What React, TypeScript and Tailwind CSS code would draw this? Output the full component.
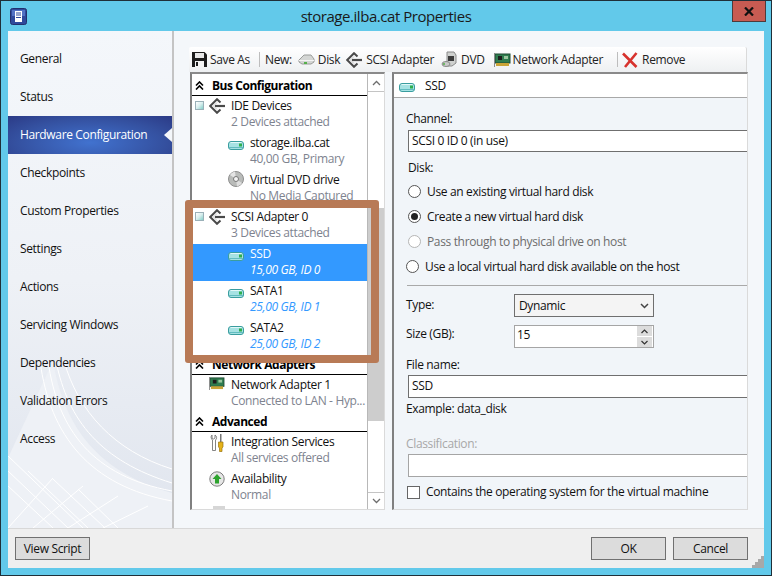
import type { ReactNode } from 'react'

const NavItems = [
  'General',
  'Status',
  'Hardware Configuration',
  'Checkpoints',
  'Custom Properties',
  'Settings',
  'Actions',
  'Servicing Windows',
  'Dependencies',
  'Validation Errors',
  'Access',
]

function AppIcon() {
  return (
    <svg width="17" height="17" viewBox="0 0 17 17">
      <rect x="0.5" y="0.5" width="16" height="16" rx="2" fill="#2f4a9c" stroke="#22306e" />
      <rect x="2" y="2" width="13" height="6" fill="#5272c4" />
      <rect x="5" y="3" width="7" height="11" fill="#fff" />
      <path d="M6 5h5M6 7h5M6 9.5h5" stroke="#2f4a9c" />
    </svg>
  )
}

function Floppy() {
  return (
    <svg width="15" height="15" viewBox="0 0 15 15">
      <path d="M0 0h12.5L15 2.5V15H0z" fill="#1c1c1c" />
      <rect x="3" y="1" width="9" height="5" fill="#e8e8e8" />
      <rect x="3" y="9" width="9" height="6" fill="#f4f4f4" />
      <rect x="4" y="10" width="2" height="4" fill="#1c1c1c" />
    </svg>
  )
}

function GrayDisk() {
  return (
    <svg width="17" height="11" viewBox="0 0 17 11">
      <path d="M1 6l5-5h7l3 4v3l-3 2H4L1 8z" fill="#d4d6d4" stroke="#9a9c9a" />
      <path d="M1 6.500h15" stroke="#f4f4f4" />
      <rect x="6" y="8" width="3" height="2" fill="#55b04a" />
    </svg>
  )
}

function Adapter() {
  return (
    <svg width="16" height="16" viewBox="0 0 16 16" fill="none">
      <path d="M11.500 4.500L8 1.200 1.200 8 8 14.800l3.500-3.300" stroke="#4a4a4a" strokeWidth="2" />
      <path d="M6 8h10" stroke="#4a4a4a" strokeWidth="2.200" />
      <path d="M8 4.500L4.500 8 8 11.500" stroke="#c8c8c8" />
    </svg>
  )
}

function DvdDevice() {
  return (
    <svg width="17" height="17" viewBox="0 0 17 17">
      <path d="M6 1h7l2 3v8l-4 3H6z" fill="#cfd1cf" stroke="#8a8a8a" />
      <rect x="7" y="5" width="6" height="5" fill="#3c3c3c" />
      <ellipse cx="5" cy="13" rx="4" ry="2.500" fill="#c8cac8" stroke="#8a8a8a" />
      <circle cx="3" cy="13" r="1" fill="#55b04a" />
    </svg>
  )
}

function Nic({ size = 17 }: { size?: number }) {
  return (
    <svg width={size} height={size - 3} viewBox="0 0 17 14">
      <rect x="1" y="1" width="15" height="9" fill="#2f7d4f" stroke="#1f4a33" />
      <rect x="4" y="3" width="4" height="4" fill="#1c1c1c" />
      <rect x="10" y="3" width="4" height="3" fill="#9bc79f" />
      <path d="M2 10h13v3H2z" fill="#c9a437" />
      <path d="M0 0h1v14H0z" fill="#8a8a8a" />
    </svg>
  )
}

function RedX() {
  return (
    <svg width="16" height="16" viewBox="0 0 16 16">
      <path d="M1 1.500L14.500 15M14.500 1L3 15" stroke="#d7322d" strokeWidth="2.600" fill="none" />
    </svg>
  )
}

function Drive({ className }: { className?: string }) {
  return (
    <svg width="16" height="9" viewBox="0 0 16 9" className={className}>
      <rect x="0.500" y="0.500" width="15" height="8" rx="2.500" fill="#a6e2e3" stroke="#3a9d9f" />
      <path d="M2.500 1.500h11" stroke="#e2f8f8" />
      <path d="M1 6.500h14" stroke="#62bcc0" />
      <rect x="11" y="2.500" width="3" height="3" fill="#2fae4e" />
    </svg>
  )
}

function Disc() {
  return (
    <svg width="16" height="16" viewBox="0 0 16 16" className="-mt-px">
      <circle cx="8" cy="8" r="7.500" fill="#b9bbb9" stroke="#8e8e8e" />
      <path d="M8 8L2 4a7 7 0 0 1 5-3.500z" fill="#e4e4e4" />
      <path d="M8 8l6 4a7 7 0 0 1-5 3.500z" fill="#dedede" />
      <circle cx="8" cy="8" r="2.500" fill="#f4f4f4" stroke="#777" />
    </svg>
  )
}

function Tools() {
  return (
    <svg width="14" height="18" viewBox="0 0 14 18">
      <path d="M2 1v3l1.500 1L5 4V1c2 1 2 4 .5 5v10.500h-3V6C1 5 .5 2 2 1z" fill="#fff" stroke="#777" strokeWidth="0.900" />
      <rect x="10" y="0" width="1.500" height="8" fill="#777" />
      <path d="M8.500 8h4.500v5l-1 1v3.500H9.500V14l-1-1z" fill="#e5b21a" stroke="#9a7410" strokeWidth="0.700" />
    </svg>
  )
}

function Availability() {
  return (
    <svg width="16" height="16" viewBox="0 0 16 16">
      <circle cx="8" cy="8" r="7.200" fill="#e6e6e6" stroke="#7d7d7d" />
      <path d="M8 3l4.500 5H10v4.500H6V8H3.500z" fill="#2ea32e" />
    </svg>
  )
}

function Expander() {
  return (
    <span className="w-[9px] h-[9px] mt-[3px] border border-[#9ab0b8] bg-linear-to-br from-[#ffffff] via-[#d8eeee] to-[#7fcfc8] shrink-0" />
  )
}

function DoubleChevron() {
  return (
    <svg width="9" height="9" viewBox="0 0 9 9" className="shrink-0">
      <path d="M1 4.500l3.500-3.500L8 4.500M1 8.500L4.500 5 8 8.500" fill="none" stroke="#000" strokeWidth="1.600" />
    </svg>
  )
}

function GroupHeader({ title }: { title: string }) {
  return (
    <div className="h-[20px] border-b border-black pl-[3px] flex items-center">
      <DoubleChevron />
      <span className="ml-[8px] font-bold text-black text-[12px] tracking-[-0.45px]">{title}</span>
    </div>
  )
}

function AdapterRow({ title, sub, icon, expander }: { title: string; sub: string; icon: ReactNode; expander?: boolean }) {
  return (
    <div className="h-[37px] flex pt-[2px] pl-[3px]">
      <span className="w-[9px] shrink-0 flex">{expander && <Expander />}</span>
      <span className="w-[16px] ml-[5px] mr-[6px] shrink-0 flex justify-center">{icon}</span>
      <div className="leading-[16px] whitespace-nowrap">
        <div className="text-[#111]">{title}</div>
        <div className="text-[#7e838f]">{sub}</div>
      </div>
    </div>
  )
}

function ChildRow({ title, sub, icon, blue, selected }: { title: string; sub: string; icon: ReactNode; blue?: boolean; selected?: boolean }) {
  return (
    <div className={`h-[37px] flex pt-[2px] pl-[36px] ${selected ? 'bg-[#3399ff]' : ''}`}>
      <span className="w-[16px] mr-[6px] shrink-0 flex justify-center items-start">{icon}</span>
      <div className="leading-[16px] whitespace-nowrap">
        <div className={selected ? 'text-white' : 'text-[#111]'}>{title}</div>
        <div className={selected ? 'text-white italic' : blue ? 'text-[#3399ff] italic' : 'text-[#7e838f]'}>{sub}</div>
      </div>
    </div>
  )
}

function HardwareList() {
  return (
    <div className="w-[195px] flex border-t-2 border-l-2 border-t-[#8a8a8a] border-l-[#808080] border-r border-b border-r-[#dadada] border-b-[#dadada] overflow-hidden">
      <div className="w-[175px] pt-[2px] bg-white overflow-hidden border-r border-[#b8b8b8] box-content">
        <GroupHeader title="Bus Configuration" />
        <AdapterRow title="IDE Devices" sub="2 Devices attached" icon={<Adapter />} expander />
        <ChildRow title="storage.ilba.cat" sub="40,00 GB, Primary" icon={<Drive className="mt-[6px]" />} />
        <ChildRow title="Virtual DVD drive" sub="No Media Captured" icon={<Disc />} />
        <AdapterRow title="SCSI Adapter 0" sub="3 Devices attached" icon={<Adapter />} expander />
        <ChildRow title="SSD" sub="15,00 GB, ID 0" icon={<Drive className="mt-[6px]" />} selected />
        <ChildRow title="SATA1" sub="25,00 GB, ID 1" icon={<Drive className="mt-[6px]" />} blue />
        <ChildRow title="SATA2" sub="25,00 GB, ID 2" icon={<Drive className="mt-[6px]" />} blue />
        <GroupHeader title="Network Adapters" />
        <AdapterRow title="Network Adapter 1" sub="Connected to LAN - Hyp..." icon={<Nic size={16} />} />
        <GroupHeader title="Advanced" />
        <AdapterRow title="Integration Services" sub="All services offered" icon={<Tools />} />
        <AdapterRow title="Availability" sub="Normal" icon={<Availability />} />
        <div className="ml-[21px] w-[12px] h-[3px] bg-[#d6d6d6]" />
      </div>
      <div className="w-[16px] flex flex-col bg-white">
        <div className="h-[17px] mt-px border-b border-[#c4c4c4] flex items-center justify-center">
          <svg width="9" height="6" viewBox="0 0 9 6">
            <path d="M1 5l3.500-3.500L8 5" fill="none" stroke="#6e6e6e" strokeWidth="1.300" />
          </svg>
        </div>
        <div className="h-[116px]" />
        <div className="h-[213px] bg-[#cdcdcd]" />
        <div className="flex-1" />
        <div className="h-[17px] border-t border-[#c4c4c4] flex items-center justify-center">
          <svg width="9" height="6" viewBox="0 0 9 6">
            <path d="M1 1l3.500 3.500L8 1" fill="none" stroke="#6e6e6e" strokeWidth="1.300" />
          </svg>
        </div>
      </div>
    </div>
  )
}

function Radio({ label, checked, disabled, flush }: { label: string; checked?: boolean; disabled?: boolean; flush?: boolean }) {
  return (
    <div className={`h-[25px] flex items-center ${flush ? 'ml-0' : 'ml-[2px]'}`}>
      <span
        className={`w-[13px] h-[13px] rounded-full border flex items-center justify-center bg-white ${disabled ? 'border-[#b5b5b5]' : 'border-[#555]'}`}
      >
        {checked && <span className="w-[7px] h-[7px] rounded-full bg-[#222]" />}
      </span>
      <span className={`ml-[6px] whitespace-nowrap ${disabled ? 'text-[#6d6d6d]' : 'text-[#111]'}`}>{label}</span>
    </div>
  )
}

function Details() {
  return (
    <div className="w-[356px] flex flex-col border-t-2 border-l-2 border-t-[#8a8a8a] border-l-[#808080] border-r border-b border-r-[#dadada] border-b-[#dadada] overflow-hidden">
      <div className="h-[22px] shrink-0 bg-white border-b border-[#a8a8a8] box-content flex items-center pl-[5px] pt-px">
        <Drive className="mt-[2px]" />
        <span className="ml-[10px] text-[#111]">SSD</span>
      </div>
      <div className="flex-1 bg-[#f1f5f9] pl-[12px] leading-[16px] text-[#111]">
        <div className="mt-[13px]">Channel:</div>
        <div className="mt-[3px] ml-[2px] h-[22px] pl-[3px] flex items-center bg-white border border-r-0 border-[#6f6f6f]">SCSI 0 ID 0 (in use)</div>
        <div className="mt-[8px] ml-[2px]">Disk:</div>
        <div className="mt-[3px]">
          <Radio label="Use an existing virtual hard disk" />
          <Radio label="Create a new virtual hard disk" checked />
          <Radio label="Pass through to physical drive on host" disabled />
          <Radio label="Use a local virtual hard disk available on the host" flush />
        </div>
        <div className="mt-[6px] ml-px h-px bg-[#a9a9a9]" />
        <div className="mt-[8px] flex items-center">
          <span className="w-[108px] pb-[2px]">Type:</span>
          <div className="w-[140px] h-[23px] pl-[4px] pr-[4px] flex items-center justify-between bg-[#f4f4f4] border border-[#6f6f6f]">
            Dynamic
            <svg width="9" height="6" viewBox="0 0 9 6">
              <path d="M1 1l3.500 3.500L8 1" fill="none" stroke="#444" strokeWidth="1.500" />
            </svg>
          </div>
        </div>
        <div className="mt-[8px] flex items-center">
          <span className="w-[108px] pb-[5px]">Size (GB):</span>
          <div className="w-[140px] h-[23px] pl-[2px] flex items-center justify-between bg-white border border-[#a5a5a5]">
            <span className="pb-[3px]">15</span>
            <div className="w-[15px] mr-px flex flex-col gap-px">
              <div className="h-[10px] bg-[#dcdcdc] flex items-center justify-center">
                <svg width="7" height="5" viewBox="0 0 7 5">
                  <path d="M.5 4l3-3 3 3" fill="none" stroke="#333" strokeWidth="1.200" />
                </svg>
              </div>
              <div className="h-[10px] bg-[#dcdcdc] flex items-center justify-center">
                <svg width="7" height="5" viewBox="0 0 7 5">
                  <path d="M.5 1l3 3 3-3" fill="none" stroke="#333" strokeWidth="1.200" />
                </svg>
              </div>
            </div>
          </div>
        </div>
        <div className="mt-[9px]">File name:</div>
        <div className="mt-[2px] ml-[2px] h-[23px] pl-[3px] pb-[2px] flex items-center bg-white border border-r-0 border-[#6f6f6f]">SSD</div>
        <div className="mt-[3px]">Example: data_disk</div>
        <div className="mt-[19px] text-[#a8a8a8]">Classification:</div>
        <div className="mt-[2px] ml-[2px] h-[23px] bg-white border border-r-0 border-[#a5a5a5]" />
        <div className="mt-[7px] flex items-center">
          <span className="ml-px w-[13px] h-[13px] bg-white border border-[#666]" />
          <span className="ml-[6px] whitespace-nowrap">Contains the operating system for the virtual machine</span>
        </div>
      </div>
    </div>
  )
}

function Toolbar() {
  return (
    <div className="w-[558px] h-[25px] shrink-0 flex items-center pl-[3px] rounded-t-[2px] bg-linear-to-b from-[#ffffff] to-[#eef0f2] border-r border-[#dadada] whitespace-nowrap text-[#222]">
      <Floppy />
      <span className="ml-[3px]">Save As</span>
      <span className="ml-[9px] w-px h-[15px] bg-[#bdbdbd]" />
      <span className="ml-[5px]">New:</span>
      <span className="ml-[6px] flex"><GrayDisk /></span>
      <span className="ml-[3px]">Disk</span>
      <span className="ml-[6px] flex"><Adapter /></span>
      <span className="ml-[4px]">SCSI Adapter</span>
      <span className="ml-[7px] flex"><DvdDevice /></span>
      <span className="ml-[3px]">DVD</span>
      <span className="ml-[9px] flex"><Nic /></span>
      <span className="ml-[2px]">Network Adapter</span>
      <span className="ml-[14px] w-px h-[15px] bg-[#bdbdbd]" />
      <span className="ml-[4px] flex"><RedX /></span>
      <span className="ml-[4px]">Remove</span>
    </div>
  )
}

function Sidebar() {
  return (
    <aside className="relative w-[164px] shrink-0 pt-[9px] bg-linear-to-b from-[#f4f7fb] via-[#eef1f6] to-[#e0e5ee] border-r-2 border-[#c4c4c4] box-content overflow-hidden">
      <svg className="absolute left-0 top-[330px]" width="164" height="167" viewBox="0 0 164 167" fill="none">
        <path d="M45 0c10 60 40 110 119 132v35H0v-70z" fill="#eef1f6" />
        <g stroke="#ffffff" strokeWidth="1">
          <path d="M40 0c10 70 45 115 124 130M48 0c12 60 45 100 116 122M56 0c14 50 50 90 108 108M32 0c10 75 50 125 132 140" />
          <path d="M0 110l60 57M0 125l45 42M0 95l75 72M20 110l60 57M45 118l52 49M70 128l40 39M0 167l45-50M25 167l50-42M60 167l50-32M95 167l45-22" />
        </g>
      </svg>
      {NavItems.map((item) =>
        item === 'Hardware Configuration' ? (
          <div
            key={item}
            className="relative h-[38px] pl-[12px] flex items-center text-white bg-[radial-gradient(ellipse_at_50%_70%,#4172cf_0%,#34509f_65%,#2b3a86_100%)]"
          >
            {item}
            <svg className="absolute right-0 top-[12px]" width="8" height="14" viewBox="0 0 8 14">
              <path d="M8 0v14L0 7z" fill="#f4f7fa" />
            </svg>
          </div>
        ) : (
          <div key={item} className="relative h-[38px] pl-[12px] flex items-center text-[#111]">
            {item}
          </div>
        ),
      )}
    </aside>
  )
}

function FooterButton({ label, className }: { label: string; className?: string }) {
  return (
    <button className={`w-[75px] h-[23px] bg-[#dcdcdc] border border-[#707070] text-[#111] ${className ?? ''}`}>
      {label}
    </button>
  )
}

export default function App() {
  return (
    <div className="relative w-[772px] h-[576px] flex flex-col border border-[#1f2f38] bg-[#62c9ea] px-[7px] pb-[7px] overflow-hidden font-['Open_Sans',sans-serif] text-[12px] tracking-[-0.35px]">
      <header className="h-[30px] shrink-0 grid grid-cols-[1fr_auto_1fr] items-center">
        <span className="pl-[2px] flex"><AppIcon /></span>
        <span className="text-[15px] tracking-[-0.45px] text-[#1a1a1a]">storage.ilba.cat Properties</span>
        <span className="self-start justify-self-end -mr-[2px] w-[34px] h-[21px] flex items-center justify-center bg-[#c75b52] border border-[#4e3a3a] border-t-0">
          <svg width="10" height="9" viewBox="0 0 10 9">
            <path d="M1 .5l8 8M9 .5l-8 8" stroke="#111" strokeWidth="2.200" />
          </svg>
        </span>
      </header>
      <div className="flex-1 flex flex-col min-h-0 bg-[#f4f7fa]">
        <main className="flex-1 flex min-h-0">
          <Sidebar />
          <div className="flex-1 pl-[15px] pt-[16px] pb-[18px] flex flex-col min-h-0">
            <Toolbar />
            <div className="flex-1 flex min-h-0 pl-px gap-[7px]">
              <HardwareList />
              <Details />
            </div>
          </div>
        </main>
        <footer className="h-[40px] shrink-0 relative flex items-start pt-[8px] pl-[7px] pr-[16px] bg-[#efefef] border-t border-[#d8d8d8]">
          <FooterButton label="View Script" />
          <FooterButton label="OK" className="ml-auto" />
          <FooterButton label="Cancel" className="ml-[7px]" />
          <svg className="absolute right-0 bottom-0" width="12" height="12" viewBox="0 0 12 12">
            <path d="M9 0h3v3H9zM6 3h3v3H6zM9 3h3v3H9zM3 6h3v3H3zM6 6h3v3H6zM9 6h3v3H9zM0 9h3v3H0zM3 9h3v3H3zM6 9h3v3H6zM9 9h3v3H9z" fill="#a8a8a8" />
          </svg>
        </footer>
      </div>
      <div className="absolute left-[184px] top-[199px] w-[194px] h-[163px] border-[8px] border-[#b87a56] rounded-[3px]" />
    </div>
  )
}
